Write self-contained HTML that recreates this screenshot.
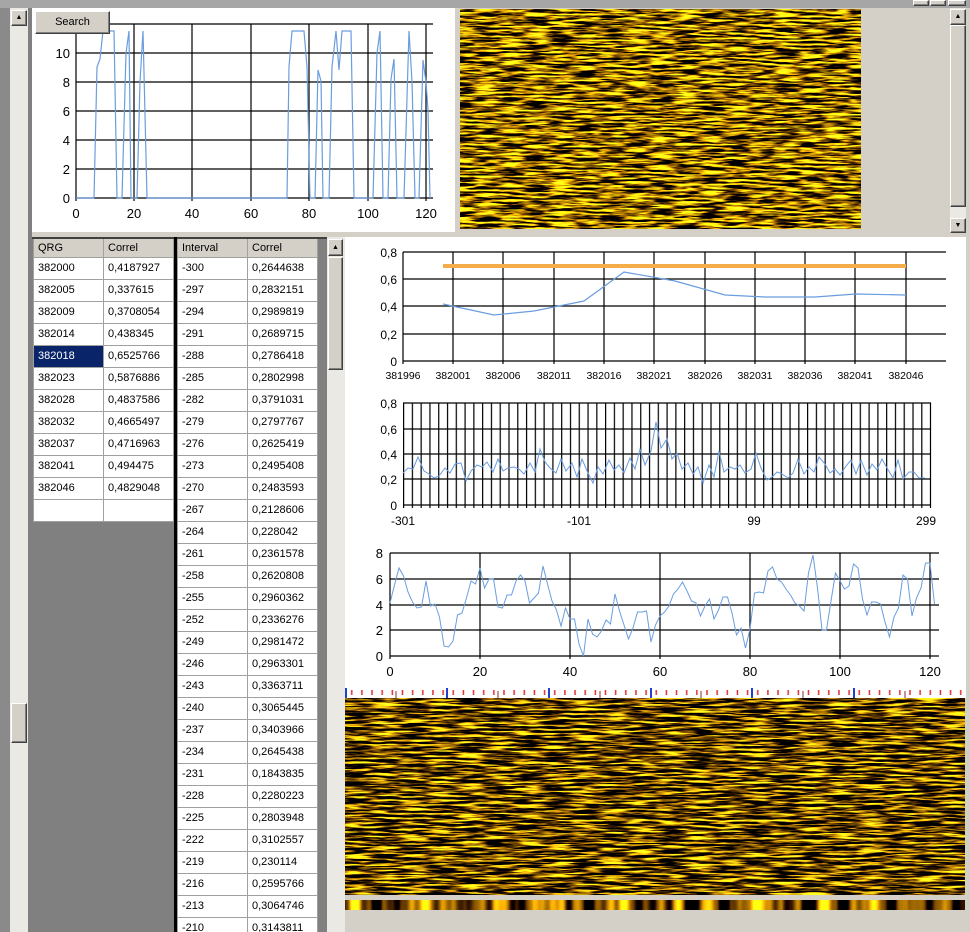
<!DOCTYPE html>
<html><head><meta charset="utf-8"><style>
*{margin:0;padding:0;box-sizing:border-box}
html,body{width:970px;height:932px;overflow:hidden}
body{background:#d4d0c8;position:relative;font-family:"Liberation Sans",sans-serif;font-size:11px;color:#000}
.a{position:absolute}
.hatch{background:#ebe9e4}
.btn{background:#d4d0c8;border:1px solid;border-color:#fff #404040 #404040 #fff;box-shadow:inset -1px -1px #808080}
table{border-collapse:collapse;position:absolute;background:#fff}
td{border:1px solid #a0a0a0;height:22px;padding:0 0 0 4px;font-size:11px;white-space:nowrap}
th{background:#d4d0c8;height:18px;font-weight:normal;text-align:left;padding-left:4px;border:1px solid #a0a0a0;border-top:none;font-size:11px}
.sel{background:#0a246a;color:#fff}
</style></head><body>
<div class="a" style="left:0;top:0;width:970px;height:8px;background:#a6a6a6"></div>
<div class="a btn" style="left:913px;top:0;width:16px;height:6px"></div>
<div class="a btn" style="left:930px;top:0;width:16px;height:6px"></div>
<div class="a btn" style="left:948px;top:0;width:18px;height:6px"></div>
<div class="a" style="left:0;top:8px;width:10px;height:924px;background:#8a8a8a"></div>
<div class="a hatch" style="left:10px;top:8px;width:18px;height:924px"></div>
<div class="a btn" style="left:11px;top:10px;width:16px;height:16px;font-size:7px;text-align:center;line-height:14px">▲</div>
<div class="a btn" style="left:11px;top:703px;width:16px;height:40px"></div>
<div class="a" style="left:28px;top:8px;width:4px;height:924px;background:#808080"></div>
<div class="a" style="left:32px;top:8px;width:423px;height:224px;background:#fff"></div>
<div class="a hatch" style="left:950px;top:8px;width:16px;height:224px"></div>
<div class="a btn" style="left:950px;top:9px;width:16px;height:16px;font-size:7px;text-align:center;line-height:14px">▲</div>
<div class="a btn" style="left:950px;top:25px;width:16px;height:182px"></div>
<div class="a btn" style="left:950px;top:218px;width:16px;height:15px;font-size:7px;text-align:center;line-height:13px">▼</div>
<div class="a" style="left:32px;top:237px;width:313px;height:695px;background:#808080;overflow:hidden">
<div class="a" style="left:142px;top:0;width:3px;height:695px;background:#000"></div>
<div class="a" style="left:0;top:0;width:142px;height:2px;background:#404040"></div>
<div class="a" style="left:145px;top:0;width:150px;height:2px;background:#404040"></div>
<div class="a hatch" style="left:295px;top:0;width:18px;height:695px"></div>
<div class="a btn" style="left:296px;top:2px;width:15px;height:17px;font-size:7px;text-align:center;line-height:15px">▲</div>
<div class="a btn" style="left:296px;top:20px;width:15px;height:113px"></div>
<table style="left:1px;top:2px;width:141px">
<tr><th style="width:70px">QRG</th><th>Correl</th></tr>
<tr><td>382000</td><td>0,4187927</td></tr>
<tr><td>382005</td><td>0,337615</td></tr>
<tr><td>382009</td><td>0,3708054</td></tr>
<tr><td>382014</td><td>0,438345</td></tr>
<tr><td class="sel">382018</td><td>0,6525766</td></tr>
<tr><td>382023</td><td>0,5876886</td></tr>
<tr><td>382028</td><td>0,4837586</td></tr>
<tr><td>382032</td><td>0,4665497</td></tr>
<tr><td>382037</td><td>0,4716963</td></tr>
<tr><td>382041</td><td>0,494475</td></tr>
<tr><td>382046</td><td>0,4829048</td></tr>
<tr><td></td><td></td></tr>
</table>
<table style="left:145px;top:2px;width:141px">
<tr><th style="width:70px">Interval</th><th>Correl</th></tr>
<tr><td>-300</td><td>0,2644638</td></tr><tr><td>-297</td><td>0,2832151</td></tr><tr><td>-294</td><td>0,2989819</td></tr><tr><td>-291</td><td>0,2689715</td></tr><tr><td>-288</td><td>0,2786418</td></tr><tr><td>-285</td><td>0,2802998</td></tr><tr><td>-282</td><td>0,3791031</td></tr><tr><td>-279</td><td>0,2797767</td></tr><tr><td>-276</td><td>0,2625419</td></tr><tr><td>-273</td><td>0,2495408</td></tr><tr><td>-270</td><td>0,2483593</td></tr><tr><td>-267</td><td>0,2128606</td></tr><tr><td>-264</td><td>0,228042</td></tr><tr><td>-261</td><td>0,2361578</td></tr><tr><td>-258</td><td>0,2620808</td></tr><tr><td>-255</td><td>0,2960362</td></tr><tr><td>-252</td><td>0,2336276</td></tr><tr><td>-249</td><td>0,2981472</td></tr><tr><td>-246</td><td>0,2963301</td></tr><tr><td>-243</td><td>0,3363711</td></tr><tr><td>-240</td><td>0,3065445</td></tr><tr><td>-237</td><td>0,3403966</td></tr><tr><td>-234</td><td>0,2645438</td></tr><tr><td>-231</td><td>0,1843835</td></tr><tr><td>-228</td><td>0,2280223</td></tr><tr><td>-225</td><td>0,2803948</td></tr><tr><td>-222</td><td>0,3102557</td></tr><tr><td>-219</td><td>0,230114</td></tr><tr><td>-216</td><td>0,2595766</td></tr><tr><td>-213</td><td>0,3064746</td></tr><tr><td>-210</td><td>0,3143811</td></tr>
</table>
</div>
<div class="a" style="left:345px;top:237px;width:621px;height:461px;background:#fff"></div>

<svg class="a" style="left:0;top:0" width="970" height="932" font-family="Liberation Sans, sans-serif">
<defs>
<filter id="sp1" x="0" y="0" width="100%" height="100%" color-interpolation-filters="sRGB">
<feTurbulence type="fractalNoise" baseFrequency="0.04 0.5" numOctaves="3" seed="3"/>
<feColorMatrix type="matrix" values="5.2 0 0 0 -2.0  4.0 0 0 0 -1.6  0.4 0 0 0 -0.2  0 0 0 0 1"/>
</filter>
<filter id="sp2" x="0" y="0" width="100%" height="100%" color-interpolation-filters="sRGB">
<feTurbulence type="fractalNoise" baseFrequency="0.035 0.45" numOctaves="3" seed="7"/>
<feColorMatrix type="matrix" values="5.0 0 0 0 -2.1  3.9 0 0 0 -1.7  0.4 0 0 0 -0.2  0 0 0 0 1"/>
</filter>
<filter id="sp3" x="0" y="0" width="100%" height="100%" color-interpolation-filters="sRGB">
<feTurbulence type="fractalNoise" baseFrequency="0.06 0.001" numOctaves="2" seed="11"/>
<feColorMatrix type="matrix" values="4.5 0 0 0 -1.7  3.5 0 0 0 -1.4  0.3 0 0 0 -0.15  0 0 0 0 1"/>
</filter>
<pattern id="vb" x="403" y="0" width="8.783" height="10" patternUnits="userSpaceOnUse"><rect x="0" y="0" width="1.2" height="10" fill="#000"/></pattern>
<pattern id="rt" x="346" y="688" width="10.15" height="10" patternUnits="userSpaceOnUse"><rect x="5" y="2" width="1.5" height="5" fill="#e03030"/></pattern>
</defs>
<rect x="460" y="9" width="401" height="220" filter="url(#sp1)"/>
<rect x="345" y="698" width="620" height="197" filter="url(#sp2)"/>
<rect x="345" y="900" width="620" height="10" filter="url(#sp3)"/>

<g stroke="#000" stroke-width="1.2">
<path d="M76 24H433M76 53H433M76 82H433M76 111H433M76 140H433M76 169H433M76 198H433"/>
<path d="M76 24V201M134 24V201M192 24V201M251 24V201M309 24V201M368 24V201M426 24V201"/>
</g>
<polyline fill="none" stroke="#6a9de0" stroke-width="1.2" points="76,198 94,198 97,67 100,59 103,31 114,31 117,198 122,198 126,53 129,31 131,198 137,198 140,82 143,31 147,198 287,198 289,67 292,31 304,31 307,67 310,198 315,198 318,70 321,81 323,198 329,198 332,67 336,31 339,70 342,31 351,31 354,198 373,198 377,53 380,31 383,198 388,198 391,79 394,59 397,198 404,198 409,31 412,82 415,198 419,198 423,60 426,82 428,110 430,198"/>
<g font-size="13" text-anchor="end"><text x="70" y="58">10</text><text x="70" y="87">8</text><text x="70" y="116">6</text><text x="70" y="145">4</text><text x="70" y="174">2</text><text x="70" y="203">0</text></g>
<g font-size="13" text-anchor="middle"><text x="76" y="218">0</text><text x="134" y="218">20</text><text x="192" y="218">40</text><text x="251" y="218">60</text><text x="309" y="218">80</text><text x="368" y="218">100</text><text x="426" y="218">120</text></g>

<g stroke="#000" stroke-width="1.2">
<path d="M403 252H946M403 279H946M403 306H946M403 334H946M403 361H946"/>
<path d="M403 252V364M453 252V364M503 252V364M554 252V364M604 252V364M654 252V364M705 252V364M755 252V364M805 252V364M855 252V364M906 252V364"/>
</g>
<line x1="443" y1="266" x2="906" y2="266" stroke="#f5ad4a" stroke-width="4"/>
<polyline fill="none" stroke="#6a9de0" stroke-width="1.2" points="443,304 494,315 534,311 584,301 624,272 675,281 725,295 765,297 815,297 856,294 906,295"/>
<g font-size="12" text-anchor="end"><text x="397" y="257">0,8</text><text x="397" y="284">0,6</text><text x="397" y="311">0,4</text><text x="397" y="339">0,2</text><text x="397" y="366">0</text></g>
<g font-size="10.5" text-anchor="middle"><text x="403" y="379">381996</text><text x="453" y="379">382001</text><text x="503" y="379">382006</text><text x="554" y="379">382011</text><text x="604" y="379">382016</text><text x="654" y="379">382021</text><text x="705" y="379">382026</text><text x="755" y="379">382031</text><text x="805" y="379">382036</text><text x="855" y="379">382041</text><text x="906" y="379">382046</text></g>

<rect x="403" y="403" width="528" height="105" fill="url(#vb)"/>
<g stroke="#000" stroke-width="1.2"><path d="M403 403H931M403 429H931M403 454H931M403 479H931M403 505H931M930.5 403V508"/></g>
<polyline fill="none" stroke="#6a9de0" stroke-width="1" points="403,473 408,468 413,469 418,457 424,471 429,474 434,478 439,476 445,468 450,473 455,464 461,463 466,481 471,471 477,465 482,467 487,462 493,472 498,459 503,471 508,468 514,467 519,469 524,474 530,463 535,472 540,449 545,462 550,468 556,473 561,459 566,471 572,463 577,477 582,459 588,473 593,483 598,467 603,474 609,460 614,470 619,465 624,473 630,458 635,469 640,449 645,465 651,451 656,422 661,448 667,439 672,459 677,453 682,469 688,463 693,474 698,467 703,483 709,465 714,477 719,451 724,472 730,467 735,469 740,465 745,473 751,469 756,453 761,468 767,480 772,477 777,472 782,474 788,478 793,473 798,459 804,474 809,467 814,472 819,457 825,464 830,473 835,469 840,475 846,466 851,460 856,474 861,460 867,475 872,464 877,470 882,459 887,468 893,478 898,460 903,479 909,472 914,472 919,478 925,478"/>
<g font-size="12" text-anchor="end"><text x="397" y="408">0,8</text><text x="397" y="434">0,6</text><text x="397" y="459">0,4</text><text x="397" y="484">0,2</text><text x="397" y="510">0</text></g>
<g font-size="12" text-anchor="middle"><text x="403" y="525">-301</text><text x="579" y="525">-101</text><text x="754" y="525">99</text><text x="926" y="525">299</text></g>

<g stroke="#000" stroke-width="1.2">
<path d="M390 553H939M390 579H939M390 605H939M390 630H939M390 656H939"/>
<path d="M390 553V659M480 553V659M570 553V659M660 553V659M750 553V659M840 553V659M930 553V659"/>
</g>
<polyline fill="none" stroke="#6a9de0" stroke-width="1" points="390,603 394.5,585 399,568 403.5,576 408,592 412.5,602 417,608 421.5,607 426,581 430.5,606 435,604 439.5,617 444,646 448.5,647 453,641 457.5,615 462,613 466.5,598 471,581 475.5,584 480,568 484.5,588 489,579 493.5,579 498,607 502.5,608 507,595 511.5,595 516,581 520.5,575 525,581 529.5,603 534,598 538.5,593 543,566 547.5,584 552,601 556.5,610 561,626 565.5,608 570,619 574.5,619 579,644 583.5,656 588,619 592.5,634 597,637 601.5,631 606,620 610.5,624 615,594 619.5,611 624,625 628.5,639 633,628 637.5,612 642,612 646.5,611 651,642 655.5,625 660,616 664.5,612 669,606 673.5,594 678,589 682.5,582 687,591 691.5,601 696,603 700.5,616 705,606 709.5,599 714,619 718.5,610 723,597 727.5,597 732,613 736.5,635 741,628 745.5,648 750,629 754.5,593 759,592 763.5,593 768,571 772.5,567 777,579 781.5,582 786,589 790.5,595 795,603 799.5,606 804,611 808.5,573 813,555 817.5,588 822,630 826.5,630 831,601 835.5,573 840,581 844.5,589 849,586 853.5,564 858,568 862.5,599 867,615 871.5,602 876,602 880.5,604 885,622 889.5,637 894,617 898.5,608 903,575 907.5,579 912,616 916.5,598 921,588 925.5,563 930,563 934.5,604"/>
<g font-size="13" text-anchor="end"><text x="383" y="558">8</text><text x="383" y="584">6</text><text x="383" y="610">4</text><text x="383" y="635">2</text><text x="383" y="661">0</text></g>
<g font-size="13" text-anchor="middle"><text x="390" y="676">0</text><text x="480" y="676">20</text><text x="570" y="676">40</text><text x="660" y="676">60</text><text x="750" y="676">80</text><text x="840" y="676">100</text><text x="930" y="676">120</text></g>

<rect x="345" y="688" width="620" height="10" fill="url(#rt)"/>
<g stroke="#2040d0" stroke-width="2"><path d="M346 688V698M447 688V698M549 688V698M651 688V698M752 688V698M854 688V698"/></g>
<g stroke="#a05050" stroke-width="1.2"><path d="M396 691V698M498 691V698M600 691V698M701 691V698M803 691V698M905 691V698"/></g>
</svg>
<div class="a btn" style="left:35px;top:11px;width:75px;height:23px;text-align:center;line-height:21px;font-size:11px">Search</div>
</body></html>
